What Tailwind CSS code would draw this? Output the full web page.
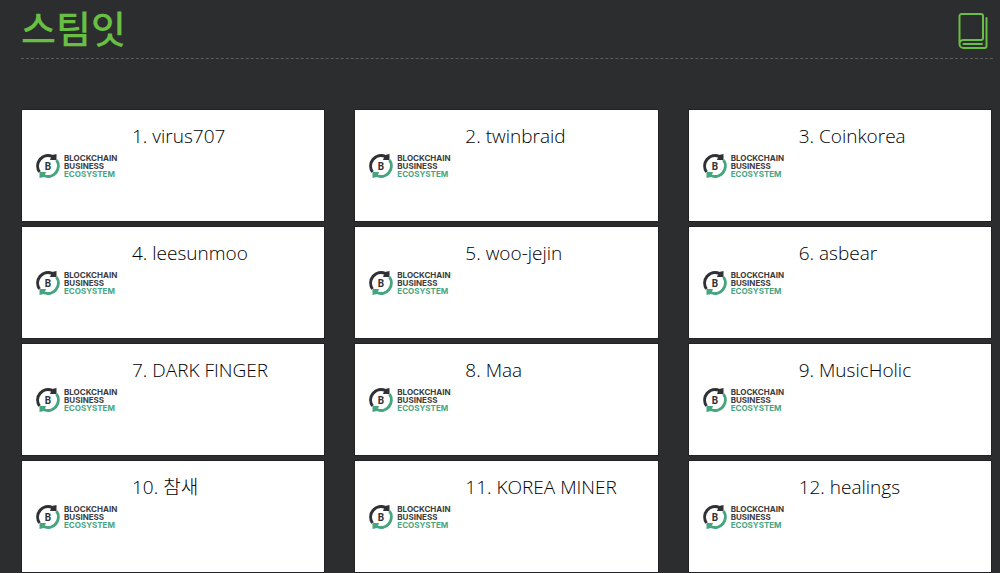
<!DOCTYPE html>
<html lang="ko">
<head>
  <meta charset="UTF-8" />
  <meta name="viewport" content="width=device-width, initial-scale=1" />
  <title>스팀잇</title>
  <script src="https://cdn.jsdelivr.net/npm/@tailwindcss/browser@4"></script>
</head>
<body class="bg-[#2c2d2f] font-['Open_Sans','Noto_Sans_CJK_KR',sans-serif]">
  <div class="pl-[21px] pr-2">
    <header class="flex justify-between items-start h-[59px] mr-[-1px] pr-[5px] border-b border-dashed border-[#5c5d5f]">
      <h1 class="text-[38px] leading-[54px] font-medium text-[#69be44] font-['Noto_Sans_CJK_KR',sans-serif]">스팀잇</h1>
      <svg class="w-[30px] h-9 mt-[13px]" viewBox="0 0 30 36" fill="none" stroke="#69be44" stroke-width="2" stroke-linecap="round" stroke-linejoin="round">
        <path d="M1.500 31V3a2 2 0 0 1 2-2h19.500a2 2 0 0 1 2 2v22a2 2 0 0 1-2 2H5.500a4 4 0 0 0 0 8h21a2 2 0 0 0 2-2V5M5.500 31h18.500" />
      </svg>
    </header>

    <ul id="list" class="grid grid-cols-3 gap-x-[29px] gap-y-1 mt-[50px]"></ul>
  </div>

  <template id="card">
    <li class="flex items-start h-[113px] px-3.5 bg-white border border-[#222124]">
      <div class="flex items-center self-center w-24 shrink-0 gap-[3px]">
        <svg class="w-[25px] h-[26px] shrink-0" viewBox="0 0 25 26" fill="none" stroke-width="3">
          <path stroke="#303134" d="M3.500 19A10.500 10.500 0 0 1 16.500 3.500" />
          <path fill="#303134" d="M20.500 1v6h-6.500l2-5z" />
          <path stroke="#46a57f" d="M20.500 7A10.500 10.500 0 0 1 7.500 22.500" />
          <path fill="#46a57f" d="M3.500 25v-6H10l-2 5z" />
          <text x="12" y="17" text-anchor="middle" class="fill-[#303134] text-[10px] font-bold font-[Roboto,sans-serif]">B</text>
        </svg>
        <p class="text-[8px] leading-[8px] font-bold text-[#3a3b3d] font-[Inter,sans-serif]">
          BLOCKCHAIN<br />BUSINESS<br /><span class="text-[#46a57f]">ECOSYSTEM</span>
        </p>
      </div>
      <h2 class="pt-3.5 text-[19px] leading-6 font-light text-black"></h2>
    </li>
  </template>

  <script>
    const members = [
      "virus707", "twinbraid", "Coinkorea",
      "leesunmoo", "woo-jejin", "asbear",
      "DARK FINGER", "Maa", "MusicHolic",
      "참새", "KOREA MINER", "healings"
    ];

    const list = document.getElementById("list");
    const card = document.getElementById("card");

    members.forEach((name, i) => {
      const item = card.content.cloneNode(true);
      item.querySelector("h2").textContent = `${i + 1}. ${name}`;
      list.appendChild(item);
    });
  </script>
</body>
</html>
